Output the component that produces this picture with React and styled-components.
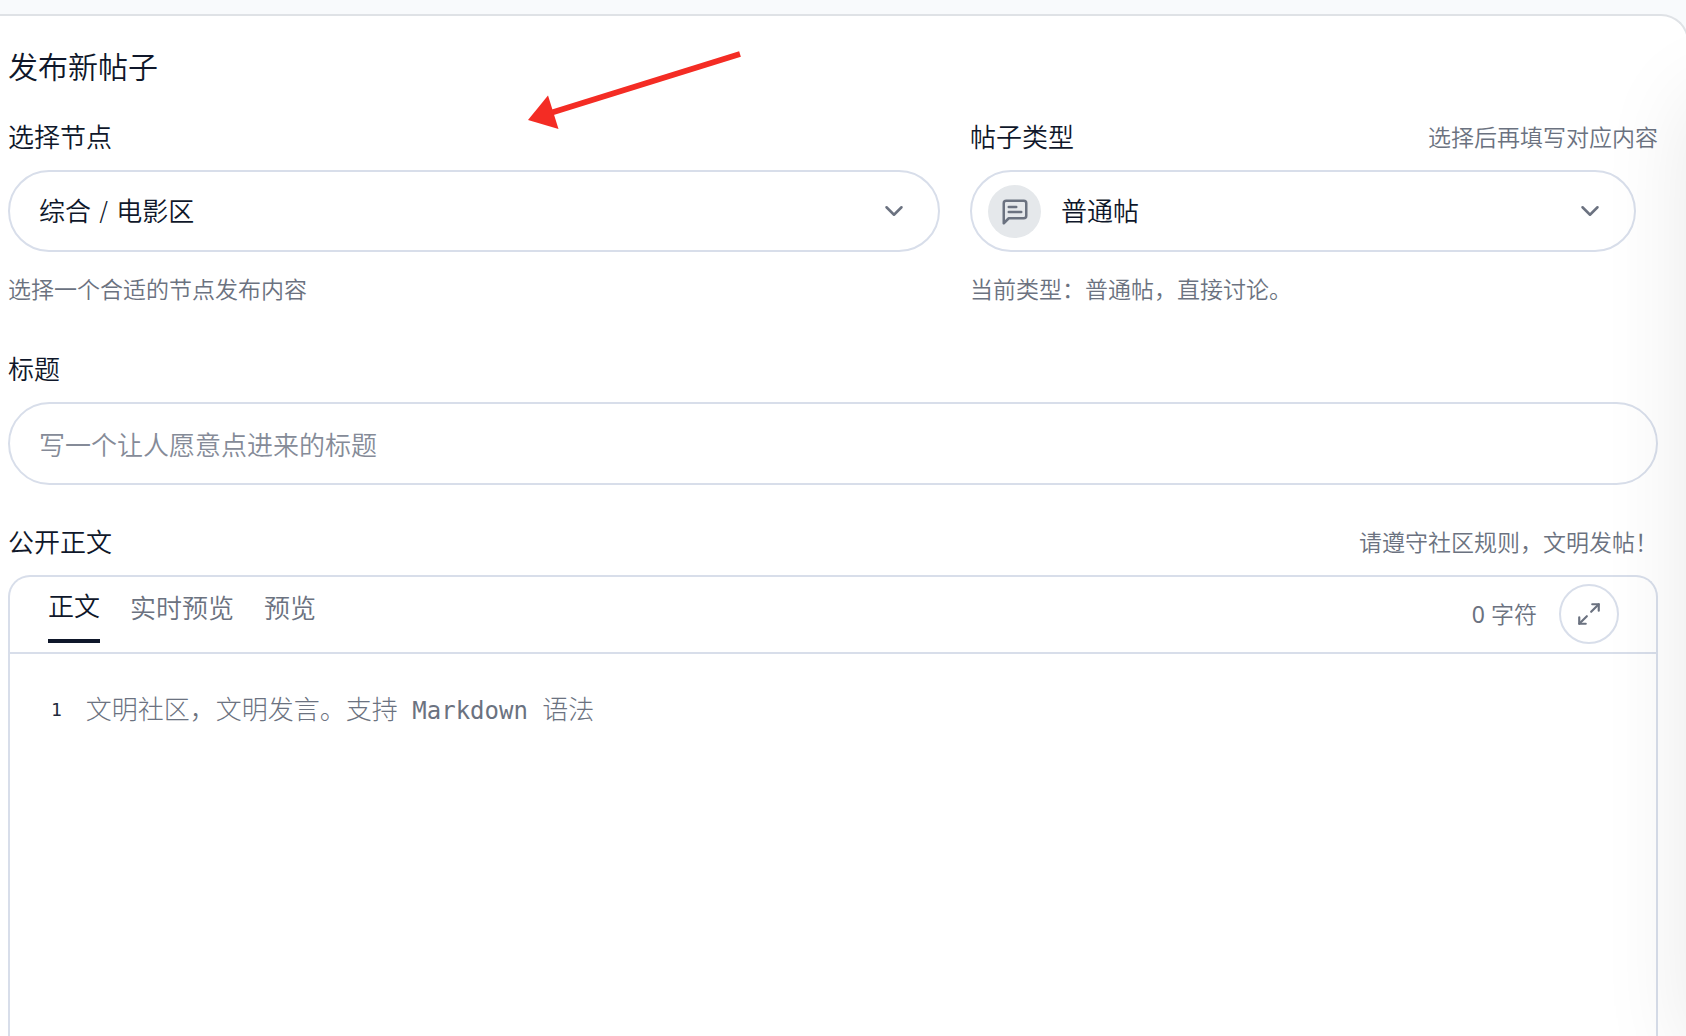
import { useState } from "react";
import styled, { createGlobalStyle } from "styled-components";
import { ChevronDown, Maximize2 } from "lucide-react";

const GlobalStyle = createGlobalStyle`
  * {
    box-sizing: border-box;
  }

  body {
    margin: 0;
    background: #f8fafc;
    color: #0f172a;
    font-family: "Noto Sans", "Noto Sans CJK SC", sans-serif;
    font-size: 26px;
    font-weight: 350;
  }

  button,
  input,
  select,
  textarea {
    font: inherit;
    color: inherit;
  }
`;

const Page = styled.div`
  display: flex;
  min-height: 100vh;
  padding-top: 14px;
  overflow: hidden;
`;

const Panel = styled.main`
  position: relative;
  flex: 1;
  display: flex;
  flex-direction: column;
  min-width: 0;
  margin-right: -3px;
  padding: 31px 29px 0 8px;
  border: 2px solid #dfe2e6;
  border-left: 0;
  border-bottom: 0;
  border-radius: 0 28px 0 0;
  background: #fff;

  &::after {
    content: "";
    position: absolute;
    top: 80px;
    bottom: -20px;
    left: 100%;
    width: 200px;
    box-shadow: 0 0 90px rgba(0, 0, 0, 0.09);
    pointer-events: none;
  }
`;

const Title = styled.h1`
  margin: 0 0 32px;
  font-size: 30px;
  font-weight: 350;
  line-height: 40px;
`;

const FieldRow = styled.div`
  display: grid;
  grid-template-columns: 233fr 172fr;
  gap: 30px;
  margin-bottom: 46px;
`;

const FieldHead = styled.div`
  display: flex;
  justify-content: space-between;
  align-items: center;
  margin-bottom: 15px;
`;

const Label = styled.label`
  line-height: 36px;
`;

const Hint = styled.span`
  color: #6b7280;
  font-size: 23px;
  line-height: 32px;
`;

const HelpText = styled.p`
  margin: 21px 0 0;
  color: #6b7280;
  font-size: 23px;
  line-height: 32px;
`;

const SelectBox = styled.div`
  position: relative;
  margin-right: ${({ $inset }) => ($inset ? "22px" : "0")};

  > svg {
    position: absolute;
    top: 26px;
    right: 31px;
    color: #6b7280;
    pointer-events: none;
  }
`;

const Select = styled.select`
  display: block;
  width: 100%;
  height: 82px;
  padding: 2px 80px 0 ${({ $withIcon }) => ($withIcon ? "89px" : "29px")};
  border: 2px solid #d8deea;
  border-radius: 41px;
  background: transparent;
  font-family: "DejaVu Sans", "Noto Sans CJK SC", sans-serif;
  appearance: none;
  outline: none;
`;

const TypeBadge = styled.span`
  position: absolute;
  top: 15px;
  left: 18px;
  display: flex;
  align-items: center;
  justify-content: center;
  width: 53px;
  height: 53px;
  border-radius: 50%;
  background: #e5e8eb;
  color: #6b7280;
  pointer-events: none;
`;

const TitleInput = styled.input`
  display: block;
  width: 100%;
  height: 83px;
  margin-bottom: 39px;
  padding: 2px 29px 0;
  border: 2px solid #d8deea;
  border-radius: 42px;
  background: transparent;
  outline: none;

  &::placeholder {
    color: #858b98;
    opacity: 1;
  }
`;

const Editor = styled.section`
  flex: 1;
  display: flex;
  flex-direction: column;
  border: 2px solid #d8deea;
  border-bottom: 0;
  border-radius: 22px 22px 0 0;
`;

const Toolbar = styled.div`
  display: flex;
  align-items: center;
  justify-content: space-between;
  height: 77px;
  padding: 0 37px 2px 38px;
  border-bottom: 2px solid #d8deea;
`;

const Tabs = styled.div`
  display: flex;
  align-self: flex-start;
  align-items: flex-start;
  gap: 30px;
`;

const Tab = styled.button`
  padding: ${({ $active }) => ($active ? "11px 0 15px" : "13px 0 0")};
  border: 0;
  border-bottom: ${({ $active }) => ($active ? "4px solid #0f172a" : "0")};
  background: none;
  color: ${({ $active }) => ($active ? "#0f172a" : "#6b7280")};
  line-height: 36px;
  cursor: pointer;
`;

const ToolbarEnd = styled.div`
  display: flex;
  align-items: center;
  gap: 22px;
`;

const Counter = styled.span`
  color: #6b7280;
  font-size: 23px;
  line-height: 32px;
`;

const Count = styled.span`
  font-weight: 400;
`;

const RoundButton = styled.button`
  display: flex;
  align-items: center;
  justify-content: center;
  width: 60px;
  height: 60px;
  padding: 0;
  border: 2px solid #d8deea;
  border-radius: 50%;
  background: transparent;
  color: #6b7280;
  cursor: pointer;
`;

const EditorBody = styled.div`
  flex: 1;
  display: flex;
  gap: 24px;
  min-height: 380px;
  padding: 38px 38px 0 41px;
  font-family: "DejaVu Sans Mono", "Noto Sans CJK SC", monospace;
  font-weight: 300;
  line-height: 36px;
`;

const LineNumber = styled.span`
  color: #1e293b;
  font-size: 18px;
`;

const WritingArea = styled.div`
  position: relative;
  flex: 1;
  display: flex;
`;

const Textarea = styled.textarea`
  flex: 1;
  padding: 0;
  border: 0;
  background: transparent;
  resize: none;
  outline: none;
`;

const Placeholder = styled.div`
  position: absolute;
  top: 0;
  left: 0;
  color: #6b7280;
  pointer-events: none;
`;

const Latin = styled.span`
  font-size: 24px;
`;

const Arrow = styled.svg`
  position: absolute;
  top: 34px;
  left: 524px;
  pointer-events: none;
`;

function PostIcon() {
  return (
    <svg
      width="30"
      height="30"
      viewBox="0 0 24 24"
      fill="none"
      stroke="currentColor"
      strokeWidth="2"
      strokeLinecap="round"
      strokeLinejoin="round"
    >
      <path d="M21 15a2 2 0 0 1-2 2H7l-4 4V5a2 2 0 0 1 2-2h14a2 2 0 0 1 2 2z" />
      <path d="M13 8H7" />
      <path d="M17 12H7" />
    </svg>
  );
}

const tabs = ["正文", "实时预览", "预览"];

function App() {
  const [activeTab, setActiveTab] = useState("正文");
  const [content, setContent] = useState("");

  return (
    <>
      <GlobalStyle />
      <Page>
        <Panel>
          <Title>发布新帖子</Title>
          <FieldRow>
            <div>
              <FieldHead>
                <Label htmlFor="node">选择节点</Label>
              </FieldHead>
              <SelectBox>
                <Select id="node">
                  <option>综合 / 电影区</option>
                </Select>
                <ChevronDown size={30} />
              </SelectBox>
              <HelpText>选择一个合适的节点发布内容</HelpText>
            </div>
            <div>
              <FieldHead>
                <Label htmlFor="type">帖子类型</Label>
                <Hint>选择后再填写对应内容</Hint>
              </FieldHead>
              <SelectBox $inset>
                <TypeBadge>
                  <PostIcon />
                </TypeBadge>
                <Select id="type" $withIcon>
                  <option>普通帖</option>
                </Select>
                <ChevronDown size={30} />
              </SelectBox>
              <HelpText>当前类型：普通帖，直接讨论。</HelpText>
            </div>
          </FieldRow>

          <FieldHead>
            <Label htmlFor="title">标题</Label>
          </FieldHead>
          <TitleInput id="title" placeholder="写一个让人愿意点进来的标题" />

          <FieldHead>
            <Label htmlFor="content">公开正文</Label>
            <Hint>请遵守社区规则，文明发帖！</Hint>
          </FieldHead>
          <Editor>
            <Toolbar>
              <Tabs>
                {tabs.map((tab) => (
                  <Tab
                    key={tab}
                    type="button"
                    $active={tab === activeTab}
                    onClick={() => setActiveTab(tab)}
                  >
                    {tab}
                  </Tab>
                ))}
              </Tabs>
              <ToolbarEnd>
                <Counter>
                  <Count>{content.length}</Count> 字符
                </Counter>
                <RoundButton type="button" aria-label="全屏">
                  <Maximize2 size={26} />
                </RoundButton>
              </ToolbarEnd>
            </Toolbar>
            <EditorBody>
              <LineNumber>1</LineNumber>
              <WritingArea>
                <Textarea
                  id="content"
                  value={content}
                  onChange={(e) => setContent(e.target.value)}
                />
                {content === "" ? (
                  <Placeholder>
                    文明社区，文明发言。支持<Latin> Markdown </Latin>语法
                  </Placeholder>
                ) : null}
              </WritingArea>
            </EditorBody>
          </Editor>

          <Arrow width="220" height="84" viewBox="524 50 220 84">
            <path d="M740 54L552 112.500" stroke="#f42c24" strokeWidth="6" />
            <path d="M528 120L548 95.500L558.500 129z" fill="#f42c24" />
          </Arrow>
        </Panel>
      </Page>
    </>
  );
}

export default App;
